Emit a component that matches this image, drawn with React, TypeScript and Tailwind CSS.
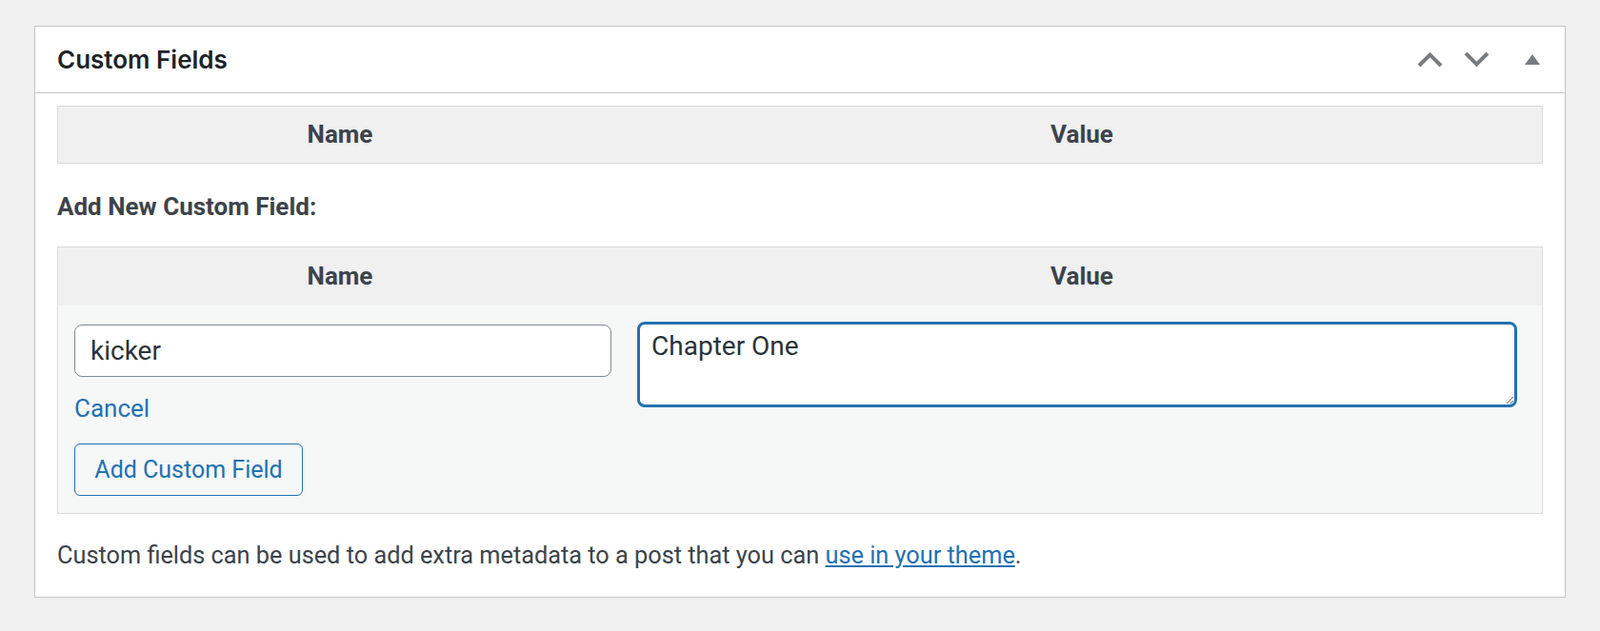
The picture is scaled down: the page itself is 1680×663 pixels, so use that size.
import { useState } from 'react'

function ChevronUp() {
  return (
    <svg width="27" height="17" viewBox="0 0 27 17" className="block">
      <polyline points="2,15 13.5,3.5 25,15" fill="none" stroke="#787c82" strokeWidth="4" />
    </svg>
  )
}

function ChevronDown() {
  return (
    <svg width="27" height="17" viewBox="0 0 27 17" className="block">
      <polyline points="2,2 13.5,13.5 25,2" fill="none" stroke="#787c82" strokeWidth="4" />
    </svg>
  )
}

function TriangleUp() {
  return (
    <svg width="16" height="12" viewBox="0 0 16 12" className="block">
      <polygon points="8,0 16,11 0,11" fill="#787c82" />
    </svg>
  )
}

export default function App() {
  const [name, setName] = useState('kicker')
  const [value, setValue] = useState('Chapter One')

  return (
    <div
      className="min-h-[663px] bg-[#f0f0f1] pt-[27px] pl-[36px] pr-[36px] text-[#3c434a]"
      style={{ fontFamily: 'Roboto, "Noto Sans", sans-serif' }}
    >
      <div className="w-[1608px] border border-[#c3c4c7] bg-white">
        {/* Header */}
        <div className="flex h-[70px] items-center justify-between border-b border-[#c3c4c7] pl-[23px] pr-[26px]">
          <h2 className="font-['Inter'] text-[26px] font-semibold text-[#1d2327]">Custom Fields</h2>
          <div className="flex items-center">
            <button className="mr-[22px]">
              <ChevronUp />
            </button>
            <button className="mr-[37px]">
              <ChevronDown />
            </button>
            <button>
              <TriangleUp />
            </button>
          </div>
        </div>

        {/* Body */}
        <div className="px-[23px] pt-[13px] pb-[25px]">
          <div className="flex h-[61px] border border-[#dcdcde] bg-[#f0f0f1] text-[26px] font-bold">
            <div className="flex w-[38%] items-center justify-center">Name</div>
            <div className="flex flex-1 items-center justify-center">Value</div>
          </div>

          <p className="mt-[27px] text-[26px] leading-[36px] font-bold">Add New Custom Field:</p>

          <div className="mt-[24px] border border-[#dcdcde]">
            <div className="flex h-[61px] bg-[#f0f0f1] text-[26px] font-bold">
              <div className="flex w-[38%] items-center justify-center">Name</div>
              <div className="flex flex-1 items-center justify-center">Value</div>
            </div>
            <div className="flex bg-[#f6f7f7] pt-[20px] pb-[18px]">
              <div className="w-[38%] pl-[17px] pr-[11px]">
                <input
                  value={name}
                  onChange={e => setName(e.target.value)}
                  className="block h-[55px] w-full rounded-[8px] border border-[#7e8993] bg-white px-[16px] text-[28px] text-[#2c3338] outline-none"
                />
                <a href="#" className="mt-[15px] block text-[26px] leading-[36px] text-[#2271b1]">
                  Cancel
                </a>
                <button className="mt-[19px] h-[55px] w-[240px] rounded-[6px] border border-[#2271b1] bg-[#f6f7f7] text-[25px] text-[#2271b1]">
                  Add Custom Field
                </button>
              </div>
              <div className="flex-1 pl-[16px] pr-[26px]">
                <textarea
                  value={value}
                  onChange={e => setValue(e.target.value)}
                  className="-mt-[3px] block h-[90px] w-full resize-y rounded-[8px] border-[3px] border-[#2271b1] bg-white px-[12px] py-[5px] text-[28px] leading-[36px] text-[#2c3338] outline-none"
                />
              </div>
            </div>
          </div>

          <p className="mt-[26px] text-[25.3px] leading-[36px]">
            Custom fields can be used to add extra metadata to a post that you can{' '}
            <a href="#" className="text-[#2271b1] underline">
              use in your theme
            </a>
            .
          </p>
        </div>
      </div>
    </div>
  )
}
